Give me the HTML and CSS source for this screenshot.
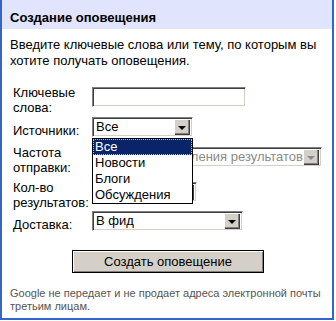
FILE: index.html
```html
<!DOCTYPE html>
<html lang="ru">
<head>
  <meta charset="UTF-8" />
  <meta name="viewport" content="width=device-width, initial-scale=1.0"/>
  <title>Google Оповещения</title>
  <link rel="stylesheet" href="styles.css">
</head>
<body>
  <div class="alert-box">
    <div class="alert-head">Создание оповещения</div>

    <div class="alert-body">
      <p class="intro">Введите ключевые слова или тему, по которым вы хотите получать оповещения.</p>

      <div class="form">
        <div class="row row-two">
          <label for="q">Ключевые слова:</label>
          <input type="text" id="q" class="field"/>
        </div>

        <div class="row row-one gap-s">
          <label>Источники:</label>
          <div class="select-wrap">
            <div class="select w-source"><span class="value">Все</span><span class="arrow"></span></div>
            <ul class="dropdown">
              <li class="selected">Все</li>
              <li>Новости</li>
              <li>Блоги</li>
              <li>Обсуждения</li>
            </ul>
          </div>
        </div>

        <div class="row row-two gap-l">
          <label>Частота отправки:</label>
          <div class="select disabled w-freq"><span class="value">По мере поступления результатов</span><span class="arrow"></span></div>
        </div>

        <div class="row row-two gap-m">
          <label>Кол-во результатов:</label>
          <div class="select w-count"><span class="value"></span><span class="arrow"></span></div>
        </div>

        <div class="row row-one gap-xs">
          <label>Доставка:</label>
          <div class="select w-delivery"><span class="value">В фид</span><span class="arrow"></span></div>
        </div>
      </div>

      <div class="actions">
        <button class="btn">Создать оповещение</button>
      </div>

      <p class="note">Google не передает и не продает адреса электронной почты третьим лицам.</p>
    </div>
  </div>
</body>
</html>
```

FILE: styles.css
```css
body {
  margin: 0;
  padding: 0;
  background-color: #ffffff;
  font-family: "Liberation Sans", Arial, sans-serif;
  font-size: 13px;
  color: #000000;
}

.alert-box {
  width: 330px;
  border: 2px solid #3366cc;
  border-top: none;
}

.alert-head {
  background-color: #e0e4fc;
  font-weight: bold;
  line-height: 15px;
  padding: 10px 8px 4px;
}

.alert-body {
  padding: 0 8px 5px;
}

.intro {
  margin: 8px 0 0;
  line-height: 16px;
}

.form {
  margin-top: 16px;
  padding-left: 3px;
}

.row {
  display: grid;
  grid-template-columns: 79px auto;
  align-items: start;
  justify-items: start;
  line-height: 15px;
}

.row-two .field,
.row-two .select {
  margin-top: 2px;
}

.row-one label {
  margin-top: 6px;
}

.gap-xs { margin-top: 1px; }
.gap-s { margin-top: 2px; }
.gap-m { margin-top: 5px; }
.gap-l { margin-top: 7px; }

/* classic inset border */
.field,
.select {
  box-sizing: border-box;
  height: 20px;
  border: 1px solid;
  border-color: #808080 #ffffff #ffffff #808080;
  box-shadow: inset 1px 1px #404040, inset -1px -1px #d4d0c8;
  background-color: #ffffff;
}

.field {
  width: 154px;
  margin: 0;
  padding: 0 3px;
  font: inherit;
}

.select {
  position: relative;
  display: flex;
  align-items: center;
  padding: 2px 2px 2px 3px;
  overflow: hidden;
  white-space: nowrap;
}

.select .value {
  flex: 1;
  overflow: hidden;
  line-height: 16px;
}

.select .arrow {
  position: relative;
  flex: none;
  width: 16px;
  height: 16px;
  background-color: #d4d0c8;
  box-shadow: inset 1px 1px #ffffff, inset -1px -1px #404040, inset -2px -2px #808080;
}

.select .arrow::after {
  content: "";
  position: absolute;
  left: 4px;
  top: 7px;
  box-sizing: border-box;
  width: 8px;
  height: 0;
  border-left: 4px solid transparent;
  border-right: 4px solid transparent;
  border-top: 4px solid #000000;
}

.select.disabled .value {
  color: #8a8a8a;
}

.select.disabled .arrow::after {
  border-top-color: #8a8a8a;
}

.w-source { width: 101px; }
.w-freq { width: 230px; }
.w-count { width: 105px; }
.w-delivery { width: 151px; }

.select-wrap {
  position: relative;
}

.dropdown {
  position: absolute;
  top: 21px;
  left: 0;
  z-index: 2;
  width: 101px;
  box-sizing: border-box;
  margin: 0;
  padding: 0;
  list-style: none;
  background-color: #ffffff;
  border: 1px solid #000000;
}

.dropdown li {
  height: 16px;
  line-height: 16px;
  padding-left: 2px;
}

.dropdown .selected {
  background-color: #0a246a;
  color: #ffffff;
  outline: 1px dotted #e8c060;
  outline-offset: -1px;
}

.actions {
  margin-top: 18px;
  display: flex;
  justify-content: center;
}

.btn {
  width: 192px;
  height: 23px;
  margin-left: 2px;
  background-color: #d4d0c8;
  border: 1px solid #000000;
  box-shadow: inset 1px 1px #ffffff, inset -1px -1px #808080;
  font-family: inherit;
  font-size: 13px;
  color: #000000;
  padding: 0;
}

.note {
  margin: 14px 0 0;
  font-size: 11px;
  line-height: 13px;
  color: #555555;
}
```
